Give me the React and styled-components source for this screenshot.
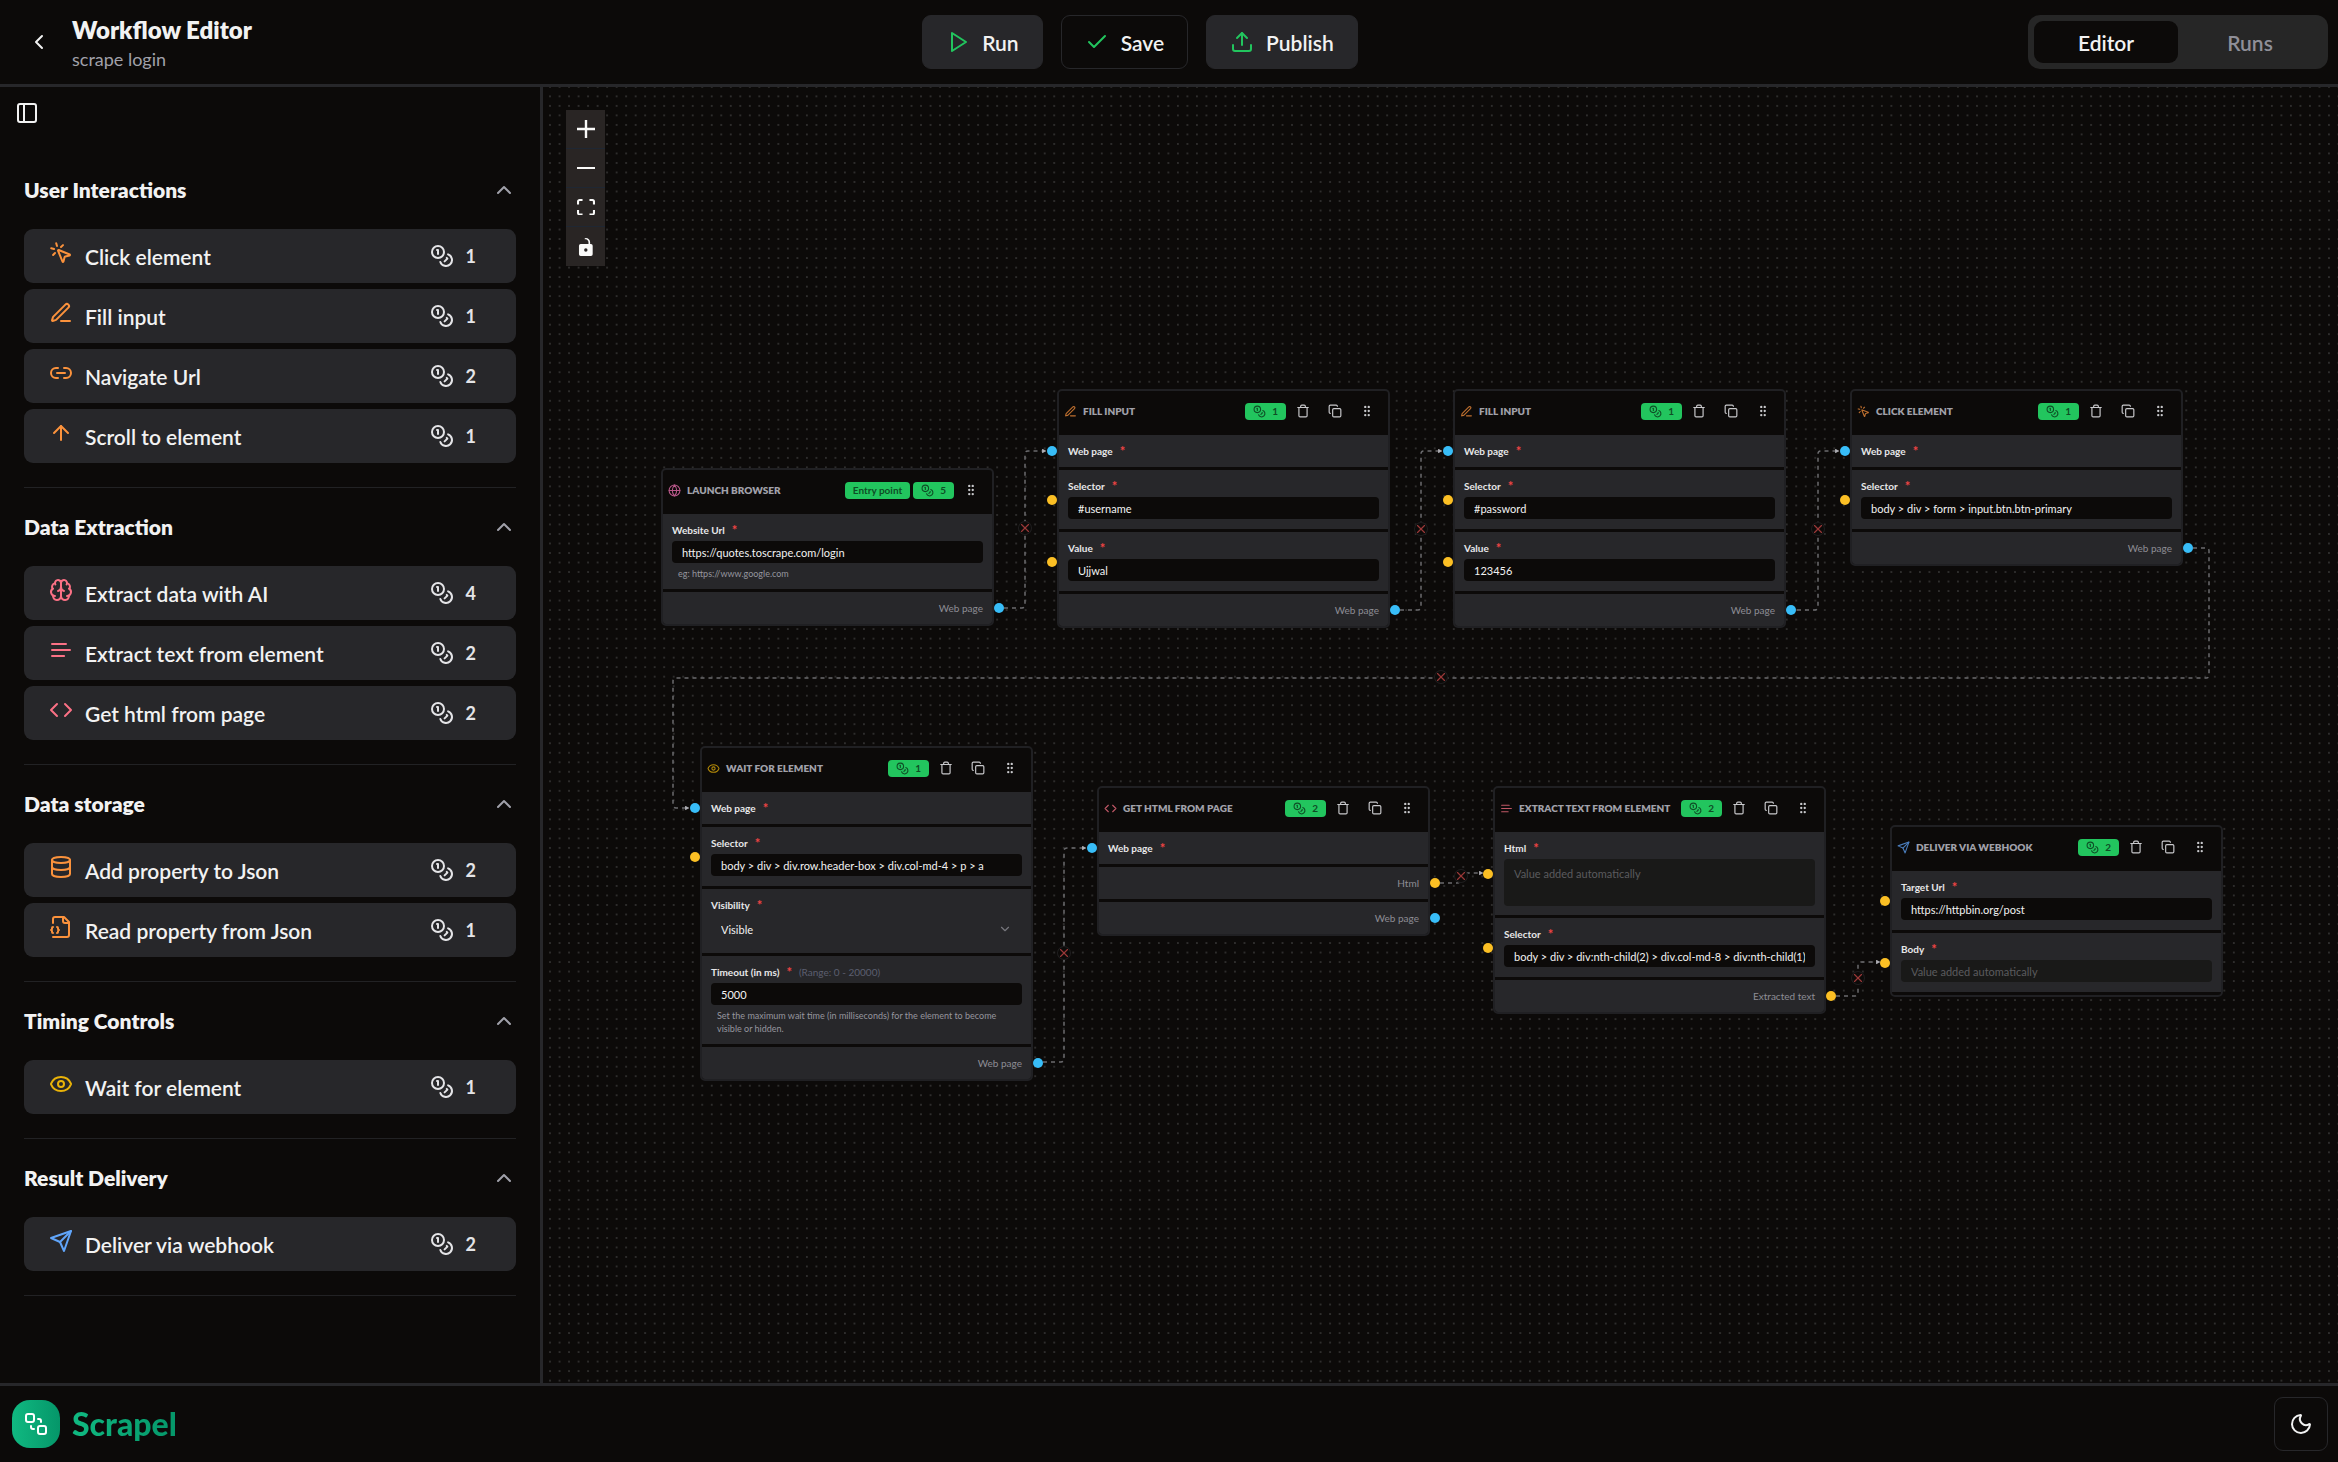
import React, { useId, useState } from "react";
import styled, { createGlobalStyle } from "styled-components";
import { ArrowUp, Brain, Check, ChevronDown, ChevronLeft, ChevronUp, Copy, Database, Eye, Globe, Link2, Moon, MousePointerClick, PanelLeft, Upload, X } from "lucide-react";

const color = {
  bg: "#0c0a09",
  panel: "#27272a",
  line: "#27272a",
  text: "#f2f2f2",
  muted: "#a1a1aa",
  green: "#22c55e",
  orange: "#fb923c",
  rose: "#fb7185",
  pink: "#f472b6",
  blue: "#60a5fa",
  yellow: "#eab308",
};

const GlobalStyle = createGlobalStyle`
  *, *::before, *::after { box-sizing: border-box; }
  body {
    margin: 0;
    background: ${color.bg};
    color: ${color.text};
    font-family: Lato, "Liberation Sans", sans-serif;
  }
  button, input, textarea, select { font: inherit; color: inherit; }
  button { background: none; border: 0; padding: 0; cursor: pointer; }
  h1, h2, p { margin: 0; }
  svg { display: block; flex: none; }
`;

/* ---------- icons ---------- */

function Glyph({ size = 24, children, strokeWidth = 2 }) {
  return (
    <svg width={size} height={size} viewBox="0 0 24 24" fill="none" stroke="currentColor" strokeWidth={strokeWidth} strokeLinecap="round" strokeLinejoin="round" aria-hidden="true">
      {children}
    </svg>
  );
}
const Pen = (p) => (
  <Glyph {...p}>
    <path d="M12 20h9" />
    <path d="M16.376 3.622a1 1 0 0 1 3.002 3.002L7.368 18.635a2 2 0 0 1-.855.506l-2.872.838a.5.5 0 0 1-.62-.62l.838-2.872a2 2 0 0 1 .506-.854z" />
  </Glyph>
);
const TextLines = (p) => (
  <Glyph {...p}><path d="M17 6.1H3M21 12.1H3M15.1 18H3" /></Glyph>
);
const Code = (p) => (
  <Glyph {...p}><path d="m16 18 6-6-6-6M8 6l-6 6 6 6" /></Glyph>
);
const FileJson = (p) => (
  <Glyph {...p}>
    <path d="M4 22h14a2 2 0 0 0 2-2V7l-5-5H6a2 2 0 0 0-2 2v4" />
    <path d="M14 2v4a2 2 0 0 0 2 2h4" />
    <path d="M4 12a1 1 0 0 0-1 1v1a1 1 0 0 1-1 1 1 1 0 0 1 1 1v1a1 1 0 0 0 1 1" />
    <path d="M8 18a1 1 0 0 0 1-1v-1a1 1 0 0 1 1-1 1 1 0 0 1-1-1v-1a1 1 0 0 0-1-1" />
  </Glyph>
);
const Send = (p) => (
  <Glyph {...p}><path d="m22 2-7 20-4-9-9-4Z" /><path d="M22 2 11 13" /></Glyph>
);
const Coins = (p) => (
  <Glyph {...p}>
    <circle cx="8" cy="8" r="6" />
    <path d="M18.09 10.37A6 6 0 1 1 10.34 18" />
    <path d="M7 6h1v4" />
    <path d="m16.71 13.88.7.71-2.82 2.82" />
  </Glyph>
);
const Play = (p) => (
  <Glyph {...p}><path d="m6 3 14 9-14 9z" /></Glyph>
);
const Trash = (p) => (
  <Glyph {...p}>
    <path d="M3 6h18M19 6v14c0 1-1 2-2 2H7c-1 0-2-1-2-2V6M8 6V4c0-1 1-2 2-2h4c1 0 2 1 2 2v2" />
  </Glyph>
);
const Grip = (p) => (
  <Glyph {...p}>
    {[5, 12, 19].map((y) => (
      <React.Fragment key={y}>
        <circle cx="9" cy={y} r="1" />
        <circle cx="15" cy={y} r="1" />
      </React.Fragment>
    ))}
  </Glyph>
);
const LogoMark = (p) => (
  <Glyph {...p}>
    <rect x="2" y="2" width="8" height="8" rx="2" />
    <rect x="14" y="14" width="8" height="8" rx="2" />
    <path d="M14 7h1a2 2 0 0 1 2 2v1" />
    <path d="M10 17H9a2 2 0 0 1-2-2v-1" />
  </Glyph>
);

/* ---------- page frame ---------- */

const Page = styled.div`
  display: flex;
  flex-direction: column;
  min-height: 100vh;
`;
const TopBar = styled.header`
  display: flex;
  align-items: center;
  justify-content: space-between;
  height: 87px;
  padding: 0 10px 0 27px;
  border-bottom: 3px solid ${color.line};
`;
const Heading = styled.div`
  display: flex;
  align-items: center;
  gap: 21px;
`;
const HeadingText = styled.div`
  padding-top: 2px;
`;
const Title = styled.h1`
  font-size: 24px;
  line-height: 31px;
  font-weight: 800;
`;
const Subtitle = styled.p`
  font-size: 18px;
  line-height: 28px;
  color: ${color.muted};
`;
const Actions = styled.div`
  display: flex;
  gap: 18px;
`;
const ActionButton = styled.button`
  display: flex;
  align-items: center;
  gap: 12px;
  height: 54px;
  padding: 0 23px;
  border: 1px solid ${color.line};
  border-radius: 9px;
  background: ${(p) => (p.$outline ? "transparent" : color.panel)};
  font-size: 21px;
  font-weight: 600;
  svg { color: ${color.green}; }
`;
const Tabs = styled.div`
  display: grid;
  grid-template-columns: 1fr 1fr;
  width: 300px;
  height: 54px;
  padding: 6px;
  border-radius: 12px;
  background: #262626;
`;
const Tab = styled.button`
  border-radius: 9px;
  font-size: 21px;
  font-weight: 600;
  color: ${(p) => (p.$active ? color.text : "#8f8f98")};
  background: ${(p) => (p.$active ? color.bg : "transparent")};
`;
const Body = styled.main`
  display: flex;
  flex: 1;
`;
const Footer = styled.footer`
  display: flex;
  align-items: center;
  justify-content: space-between;
  height: 79px;
  padding: 0 10px 0 12px;
  border-top: 3px solid ${color.line};
`;
const Brand = styled.a`
  display: flex;
  align-items: center;
  gap: 12px;
  text-decoration: none;
`;
const BrandTile = styled.span`
  display: grid;
  place-items: center;
  width: 48px;
  height: 48px;
  border-radius: 18px;
  color: #fff;
  background: linear-gradient(90deg, #10b981, #059669);
`;
const BrandName = styled.span`
  font-size: 32px;
  line-height: 38px;
  font-weight: 900;
  color: transparent;
  background: linear-gradient(90deg, #10b981, #059669);
  background-clip: text;
`;
const ThemeButton = styled.button`
  display: grid;
  place-items: center;
  width: 54px;
  height: 54px;
  border: 1px solid ${color.line};
  border-radius: 9px;
`;

/* ---------- sidebar ---------- */

const Sidebar = styled.aside`
  width: 543px;
  flex: none;
  border-right: 3px solid ${color.line};
`;
const SidebarTop = styled.div`
  height: 64px;
  padding: 14px 15px;
`;
const Section = styled.section`
  margin: 0 24px;
  padding-bottom: 24px;
  border-bottom: 1px solid #222224;
`;
const SectionToggle = styled.button`
  display: flex;
  align-items: center;
  justify-content: space-between;
  width: 100%;
  height: 78px;
  font-size: 21px;
  line-height: 30px;
  font-weight: 800;
  svg { color: ${color.muted}; }
`;
const TaskList = styled.div`
  display: flex;
  flex-direction: column;
  gap: 6px;
`;
const TaskButton = styled.button`
  display: flex;
  align-items: center;
  justify-content: space-between;
  height: 54px;
  padding: 0 40px 0 25px;
  border-radius: 9px;
  background: ${color.panel};
  font-size: 21px;
  font-weight: 600;
`;
const TaskName = styled.span`
  display: flex;
  gap: 12px;
  padding-top: 2px;
  line-height: 32px;
  svg { color: ${(p) => p.$tint}; }
`;
const Cost = styled.span`
  display: flex;
  align-items: center;
  gap: 12px;
  font-size: 18px;
  font-weight: 700;
  color: #e4e4e7;
`;

const SECTIONS = [
  ["User Interactions", [
    ["Click element", MousePointerClick, color.orange, 1],
    ["Fill input", Pen, color.orange, 1],
    ["Navigate Url", Link2, color.orange, 2],
    ["Scroll to element", ArrowUp, color.orange, 1],
  ]],
  ["Data Extraction", [
    ["Extract data with AI", Brain, color.rose, 4],
    ["Extract text from element", TextLines, color.rose, 2],
    ["Get html from page", Code, color.rose, 2],
  ]],
  ["Data storage", [
    ["Add property to Json", Database, color.orange, 2],
    ["Read property from Json", FileJson, color.orange, 1],
  ]],
  ["Timing Controls", [["Wait for element", Eye, color.yellow, 1]]],
  ["Result Delivery", [["Deliver via webhook", Send, color.blue, 2]]],
];

function TaskSection({ title, tasks }) {
  const [open, setOpen] = useState(true);
  return (
    <Section>
      <SectionToggle aria-expanded={open} onClick={() => setOpen(!open)}>
        {title}
        {open ? <ChevronUp size={24} /> : <ChevronDown size={24} />}
      </SectionToggle>
      {open && (
        <TaskList>
          {tasks.map(([name, Icon, tint, cost]) => (
            <TaskButton key={name} draggable>
              <TaskName $tint={tint}><Icon size={24} />{name}</TaskName>
              <Cost><Coins size={24} />{cost}</Cost>
            </TaskButton>
          ))}
        </TaskList>
      )}
    </Section>
  );
}

/* ---------- canvas ---------- */

const Canvas = styled.section`
  position: relative;
  flex: 1;
  overflow: hidden;
`;
const Wires = styled.svg`
  position: absolute;
  inset: 0;
  width: 100%;
  height: 100%;
`;
const Controls = styled.div`
  position: absolute;
  top: 23px;
  left: 23px;
  display: flex;
  flex-direction: column;
`;
const ControlButton = styled.button`
  display: grid;
  place-items: center;
  width: 39px;
  height: 39px;
  background: #292524;
  border-bottom: 1px solid #1f2733;
  svg { width: 18px; max-height: 18px; fill: #fafaf9; }
  &:last-child { border-bottom: 0; }
`;
const Cut = styled.button`
  position: absolute;
  left: ${(p) => p.$x}px;
  top: ${(p) => p.$y}px;
  display: grid;
  place-items: center;
  width: 14px;
  height: 14px;
  margin: -7px 0 0 -7px;
  border-radius: 50%;
  background: ${color.bg};
  box-shadow: inset 0 0 0 1px #1f1e1f;
  color: #9a3838;
`;
const Node = styled.article`
  position: absolute;
  left: ${(p) => p.$x}px;
  top: ${(p) => p.$y}px;
  width: 333px;
  border: 2px solid #202023;
  border-radius: 5px;
  background: ${color.bg};
`;
const NodeHeader = styled.header`
  display: flex;
  align-items: center;
  height: 44px;
  padding: 0 5px 4px 5px;
  > svg { color: ${(p) => p.$tint}; opacity: 0.75; margin-right: 6px; }
`;
const NodeTitle = styled.h2`
  flex: 1;
  font-size: 10px;
  line-height: 16px;
  font-weight: 800;
  color: ${color.muted};
  text-transform: uppercase;
  white-space: nowrap;
`;
const Badge = styled.span`
  display: flex;
  align-items: center;
  gap: 6px;
  height: 17px;
  padding: 0 8px;
  margin-right: ${(p) => (p.$last ? 1 : 3)}px;
  border-radius: 4px;
  background: ${color.green};
  color: #0f4d26;
  font-size: 10px;
  font-weight: 700;
`;
const NodeButton = styled.button`
  display: grid;
  place-items: center;
  width: 32px;
  height: 20px;
  color: #c9c9cc;
`;
const Row = styled.div`
  position: relative;
  padding: 9px;
  background: ${color.panel};
  border-radius: ${(p) => (p.$last ? "0 0 3px 3px" : "0")};
  & + & { margin-top: 3px; }
  &:last-child { margin-bottom: ${(p) => (p.$last ? 0 : 3)}px; }
`;
const Label = styled.label`
  display: flex;
  gap: 7px;
  font-size: 10px;
  line-height: 14px;
  font-weight: 700;
  color: #e7e7e9;
`;
const Star = styled.span`
  font-size: 13px;
  color: #ef4444;
`;
const Range = styled.span`
  font-weight: 400;
  color: #5c5f70;
`;
const OutName = styled.p`
  font-size: 10px;
  line-height: 14px;
  text-align: right;
  color: #8d8d95;
`;
const Field = styled.input`
  display: block;
  width: 100%;
  height: 22px;
  margin: 4px 0 1px;
  padding: 0 10px;
  border: 0;
  border-radius: 4px;
  background: ${color.bg};
  font-size: 11px;
  &:disabled, &::placeholder { color: #5b5b5e; opacity: 1; }
  &:disabled { background: #191918; }
`;
const Area = styled(Field).attrs({ as: "textarea" })`
  height: 47px;
  margin-bottom: 0;
  padding: 7px 10px;
  line-height: 16px;
  resize: none;
`;
const SelectBox = styled.div`
  position: relative;
  margin: 4px 0 1px;
  svg { position: absolute; right: 10px; top: 6px; color: #77777d; pointer-events: none; }
`;
const Select = styled.select`
  display: block;
  width: 100%;
  height: 27px;
  padding: 0 10px;
  border: 0;
  appearance: none;
  background: transparent;
  font-size: 11px;
`;
const Helper = styled.p`
  padding: 3px 6px 0;
  font-size: 9px;
  line-height: 13px;
  color: #96969e;
`;
const Handle = styled.i`
  position: absolute;
  top: 50%;
  ${(p) => (p.$side === "left" ? "left: -12px;" : "right: -12px;")}
  width: 10px;
  height: 10px;
  margin-top: -5px;
  border-radius: 50%;
  background: ${(p) => (p.$kind === "page" ? "#38bdf8" : "#fbbf24")};
`;

const NODES = [
  { x: 118, y: 381, title: "Launch browser", icon: Globe, tint: color.pink, cost: 5, entry: true,
    rows: [{ label: "Website Url", value: "https://quotes.toscrape.com/login", helper: "eg: https://www.google.com", noHandle: true }],
    outs: [["Web page", "page"]] },
  { x: 514, y: 302, title: "Fill input", icon: Pen, tint: color.orange, cost: 1,
    rows: [{ label: "Web page", page: true }, { label: "Selector", value: "#username" }, { label: "Value", value: "Ujjwal" }],
    outs: [["Web page", "page"]] },
  { x: 910, y: 302, title: "Fill input", icon: Pen, tint: color.orange, cost: 1,
    rows: [{ label: "Web page", page: true }, { label: "Selector", value: "#password" }, { label: "Value", value: "123456" }],
    outs: [["Web page", "page"]] },
  { x: 1307, y: 302, title: "Click element", icon: MousePointerClick, tint: color.orange, cost: 1,
    rows: [{ label: "Web page", page: true }, { label: "Selector", value: "body > div > form > input.btn.btn-primary" }],
    outs: [["Web page", "page"]] },
  { x: 157, y: 659, title: "Wait for element", icon: Eye, tint: color.yellow, cost: 1,
    rows: [
      { label: "Web page", page: true },
      { label: "Selector", value: "body > div > div.row.header-box > div.col-md-4 > p > a" },
      { label: "Visibility", options: ["Visible", "Hidden"], noHandle: true },
      { label: "Timeout (in ms)", range: "(Range: 0 - 20000)", value: "5000", helper: "Set the maximum wait time (in milliseconds) for the element to become visible or hidden.", noHandle: true },
    ],
    outs: [["Web page", "page"]] },
  { x: 554, y: 699, title: "Get html from page", icon: Code, tint: color.rose, cost: 2,
    rows: [{ label: "Web page", page: true }],
    outs: [["Html", "data"], ["Web page", "page"]] },
  { x: 950, y: 699, title: "Extract text from element", icon: TextLines, tint: color.rose, cost: 2,
    rows: [{ label: "Html", area: true, auto: true }, { label: "Selector", value: "body > div > div:nth-child(2) > div.col-md-8 > div:nth-child(1) > span.text" }],
    outs: [["Extracted text", "data"]] },
  { x: 1347, y: 738, title: "Deliver via webhook", icon: Send, tint: color.blue, cost: 2,
    rows: [{ label: "Target Url", value: "https://httpbin.org/post" }, { label: "Body", auto: true }],
    outs: [] },
];

/* Each wire: its path and the place of its delete button. */
const WIRES = [
  ["M461 521H479Q482 521 482 518V367Q482 364 485 364H501", 482, 441],
  ["M857 523H875Q878 523 878 520V367Q878 364 881 364H897", 878, 442],
  ["M1254 523H1272Q1275 523 1275 520V367Q1275 364 1278 364H1294", 1275, 442],
  ["M1650 461H1663Q1666 461 1666 464V588Q1666 591 1663 591H133Q130 591 130 594V718Q130 721 133 721H144", 898, 590],
  ["M500 975H518Q521 975 521 972V764Q521 761 524 761H541", 521, 866],
  ["M897 796H914Q918 796 918 791Q918 786 922 786H938", 918, 789],
  ["M1293 909H1312Q1315 909 1315 906V878Q1315 875 1318 875H1335", 1315, 891],
];

function FieldRow({ row }) {
  const id = useId();
  return (
    <Row>
      {!row.noHandle && <Handle $side="left" $kind={row.page ? "page" : "data"} />}
      <Label as={row.page ? "div" : "label"} htmlFor={row.page ? undefined : id}>
        {row.label}
        <Star>*</Star>
        {row.range && <Range>{row.range}</Range>}
      </Label>
      {row.options && (
        <SelectBox>
          <Select id={id}>{row.options.map((o) => <option key={o}>{o}</option>)}</Select>
          <ChevronDown size={14} />
        </SelectBox>
      )}
      {row.area && <Area id={id} disabled placeholder="Value added automatically" />}
      {row.auto && !row.area && <Field id={id} disabled placeholder="Value added automatically" />}
      {row.value && <Field id={id} defaultValue={row.value} />}
      {row.helper && <Helper>{row.helper}</Helper>}
    </Row>
  );
}

function FlowNode({ node }) {
  const Icon = node.icon;
  return (
    <Node $x={node.x} $y={node.y}>
      <NodeHeader $tint={node.tint}>
        <Icon size={13} />
        <NodeTitle>{node.title}</NodeTitle>
        {node.entry && <Badge>Entry point</Badge>}
        <Badge $last><Coins size={13} />{node.cost}</Badge>
        {!node.entry && (
          <>
            <NodeButton aria-label="Delete"><Trash size={14} /></NodeButton>
            <NodeButton aria-label="Duplicate"><Copy size={14} /></NodeButton>
          </>
        )}
        <NodeButton aria-label="Move"><Grip size={14} /></NodeButton>
      </NodeHeader>
      {node.rows.map((row) => <FieldRow key={row.label} row={row} />)}
      {node.outs.map(([name, kind], i) => (
        <Row key={name} $last={i === node.outs.length - 1}>
          <OutName>{name}</OutName>
          <Handle $side="right" $kind={kind} />
        </Row>
      ))}
    </Node>
  );
}

export default function App() {
  const [tab, setTab] = useState("Editor");
  return (
    <>
      <GlobalStyle />
      <Page>
        <TopBar>
          <Heading>
            <button aria-label="Back"><ChevronLeft size={24} /></button>
            <HeadingText>
              <Title>Workflow Editor</Title>
              <Subtitle>scrape login</Subtitle>
            </HeadingText>
          </Heading>
          <Actions>
            <ActionButton><Play />Run</ActionButton>
            <ActionButton $outline><Check size={24} />Save</ActionButton>
            <ActionButton><Upload size={24} />Publish</ActionButton>
          </Actions>
          <Tabs role="tablist">
            {["Editor", "Runs"].map((t) => (
              <Tab key={t} role="tab" aria-selected={tab === t} $active={tab === t} onClick={() => setTab(t)}>{t}</Tab>
            ))}
          </Tabs>
        </TopBar>
        <Body>
          <Sidebar>
            <SidebarTop>
              <button aria-label="Toggle sidebar"><PanelLeft size={24} /></button>
            </SidebarTop>
            {SECTIONS.map(([title, tasks]) => <TaskSection key={title} title={title} tasks={tasks} />)}
          </Sidebar>
          <Canvas aria-label="Workflow canvas">
            <Wires aria-hidden="true">
              <defs>
                <pattern id="dots" x="2.3" y="4.6" width="9.513" height="9.513" patternUnits="userSpaceOnUse">
                  <circle cx="4.75" cy="4.75" r="0.75" fill="#5a5a5a" />
                </pattern>
                <marker id="arrow" viewBox="0 0 6 6" refX="3" refY="3" markerWidth="5" markerHeight="5" markerUnits="userSpaceOnUse">
                  <path d="M1 1 5 3 1 5z" fill="#b1b1b7" stroke="#b1b1b7" />
                </marker>
              </defs>
              <rect width="100%" height="100%" fill="url(#dots)" />
              {WIRES.map(([d]) => (
                <path key={d} d={d} fill="none" stroke="#6b6b6e" strokeWidth="1.5" strokeDasharray="4 4" markerEnd="url(#arrow)" />
              ))}
            </Wires>
            {NODES.map((node, i) => <FlowNode key={i} node={node} />)}
            {WIRES.map(([d, x, y]) => (
              <Cut key={d} $x={x} $y={y} aria-label="Remove connection"><X size={14} strokeWidth={2} /></Cut>
            ))}
            <Controls>
              <ControlButton aria-label="Zoom in">
                <svg viewBox="0 0 32 32"><path d="M32 18.133H18.133V32h-4.266V18.133H0v-4.266h13.867V0h4.266v13.867H32z" /></svg>
              </ControlButton>
              <ControlButton aria-label="Zoom out">
                <svg viewBox="0 0 32 5"><path d="M0 0h32v4.2H0z" /></svg>
              </ControlButton>
              <ControlButton aria-label="Fit view">
                <svg viewBox="0 0 32 30"><path d="M3.692 4.63c0-.53.4-.938.939-.938h5.215V0H4.708C2.13 0 0 2.054 0 4.63v5.216h3.692V4.631zM27.354 0h-5.2v3.692h5.17c.53 0 .984.4.984.939v5.215H32V4.631A4.624 4.624 0 0027.354 0zm.954 24.83c0 .532-.4.94-.939.94h-5.215v3.768h5.215c2.577 0 4.631-2.13 4.631-4.707v-5.139h-3.692v5.139zm-23.677.94c-.531 0-.939-.4-.939-.94v-5.138H0v5.139c0 2.577 2.13 4.707 4.708 4.707h5.138V25.77H4.631z" /></svg>
              </ControlButton>
              <ControlButton aria-label="Lock canvas">
                <svg viewBox="0 0 25 32"><path d="M21.333 10.667H19.81V7.619C19.81 3.429 16.38 0 12.19 0c-4.114 1.828-1.37 2.133.305 2.438 1.676.305 4.42 2.59 4.42 5.181v3.048H3.047A3.056 3.056 0 000 13.714v15.238A3.056 3.056 0 003.048 32h18.285a3.056 3.056 0 003.048-3.048V13.714a3.056 3.056 0 00-3.048-3.047zM12.19 24.533a3.056 3.056 0 01-3.047-3.047 3.056 3.056 0 013.047-3.048 3.056 3.056 0 013.048 3.048 3.056 3.056 0 01-3.048 3.047z" /></svg>
              </ControlButton>
            </Controls>
          </Canvas>
        </Body>
        <Footer>
          <Brand href="#"><BrandTile><LogoMark /></BrandTile><BrandName>Scrapel</BrandName></Brand>
          <ThemeButton aria-label="Switch theme"><Moon size={24} /></ThemeButton>
        </Footer>
      </Page>
    </>
  );
}
